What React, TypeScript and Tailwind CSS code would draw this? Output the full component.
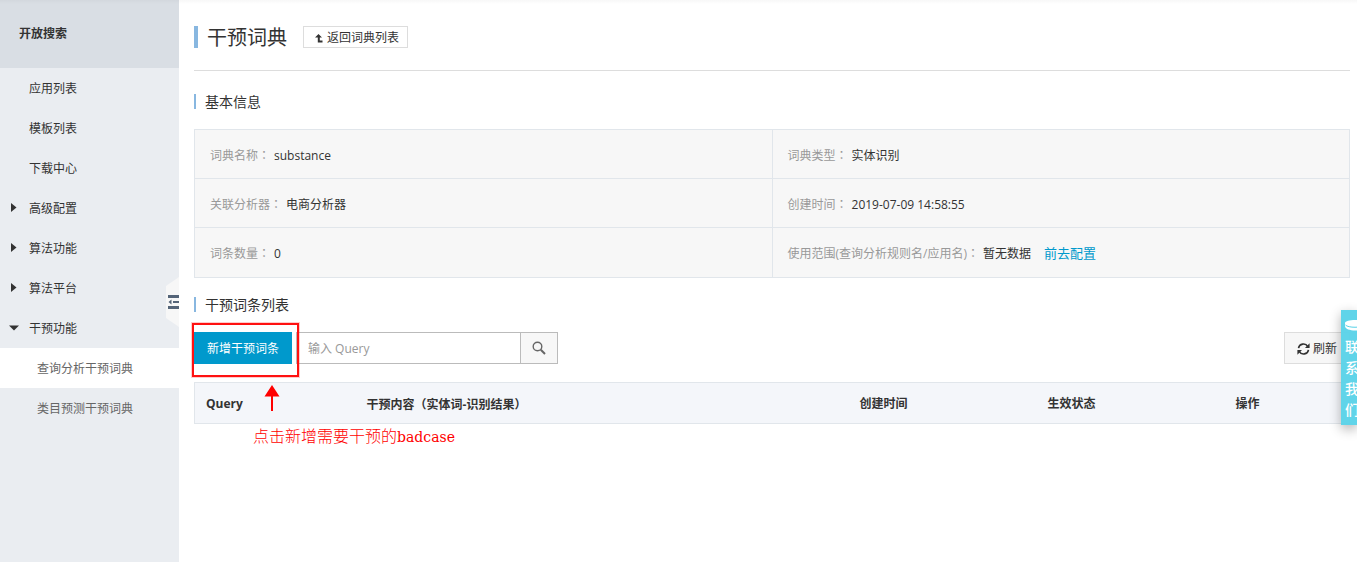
import { useState } from 'react';

const links = ['应用列表', '模板列表', '下载中心'];
const groups = ['高级配置', '算法功能', '算法平台'];
const children = ['查询分析干预词典', '类目预测干预词典'];

const info = [
  [
    { label: '词典名称', value: 'substance' },
    { label: '词典类型', value: '实体识别' },
  ],
  [
    { label: '关联分析器', value: '电商分析器' },
    { label: '创建时间', value: '2019-07-09 14:58:55' },
  ],
  [
    { label: '词条数量', value: '0' },
    {
      label: '使用范围(查询分析规则名/应用名)',
      value: '暂无数据',
      link: '前去配置',
    },
  ],
];

// the TC face centres full-width punctuation in its box
function Punct({ children }: { children: string }) {
  return (
    <span className="font-['Noto_Sans_CJK_TC',sans-serif]">{children}</span>
  );
}

function Sidebar() {
  const [active, setActive] = useState(children[0]);

  return (
    <aside className="relative w-[179px] shrink-0 bg-[#eaedf1]">
      <h2 className="flex h-[68px] items-center bg-[#d9dee4] pl-[19px] font-bold">
        开放搜索
      </h2>
      <nav>
        {links.map((item) => (
          <a
            key={item}
            href="#"
            className="flex h-10 items-center pt-0.5 pl-[29px]"
          >
            {item}
          </a>
        ))}
        {groups.map((item) => (
          <button
            key={item}
            type="button"
            className="flex h-10 w-full items-center pt-0.5 pl-[9px]"
          >
            <svg width="10" height="14" viewBox="0 0 10 14" className="mr-[10px]">
              <path d="M2 1L7.5 5.5L2 10Z" fill="#333" />
            </svg>
            {item}
          </button>
        ))}
        <button
          type="button"
          className="flex h-10 w-full items-center pt-0.5 pl-[9px]"
        >
          <svg width="10" height="14" viewBox="0 0 10 14" className="mr-[10px]">
            <path d="M0 3.5H10L5 8.5Z" fill="#333" />
          </svg>
          干预功能
        </button>
        {children.map((item) => (
          <a
            key={item}
            href="#"
            onClick={() => setActive(item)}
            className={`flex h-10 items-center pt-0.5 pl-[37px] text-[#666] ${
              active == item ? 'bg-white' : ''
            }`}
          >
            {item}
          </a>
        ))}
      </nav>

      <button
        type="button"
        aria-label="收起"
        className="absolute top-[277px] right-0"
      >
        <svg width="13" height="50" viewBox="0 0 13 50">
          <path d="M13 0L0 9V41L13 50Z" fill="#f7f7f7" />
          <path
            d="M2 18H13V21H2ZM7 24H13V26H7ZM2 29H13V32H2ZM5.5 22.5V27.5L2.5 25Z"
            fill="#546478"
          />
        </svg>
      </button>
    </aside>
  );
}

function SectionTitle({ title }: { title: string }) {
  return (
    <h3 className="flex h-[15px] items-center border-l-2 border-[#88b7e0] pl-[9px] text-sm">
      {title}
    </h3>
  );
}

function InfoTable() {
  return (
    <table className="mt-5 w-full table-fixed border-collapse bg-[#f7f7f7]">
      <tbody>
        {info.map((row) => (
          <tr key={row[0].label} className="h-[49px] last:h-[50px]">
            {row.map((cell) => (
              <td
                key={cell.label}
                className="border border-[#e1e6eb] px-[15px] pt-0.5"
              >
                <span className="mr-1 text-[#999]">
                  {cell.label}
                  <Punct>：</Punct>
                </span>
                {cell.value}
                {cell.link && (
                  <a href="#" className="ml-[13px] text-[13px] text-[#09c]">
                    {cell.link}
                  </a>
                )}
              </td>
            ))}
          </tr>
        ))}
      </tbody>
    </table>
  );
}

function Toolbar() {
  const [query, setQuery] = useState('');

  return (
    <div className="relative mt-5 flex h-8">
      <button type="button" className="w-[98px] bg-[#09c] pt-0.5 text-white">
        新增干预词条
      </button>
      <input
        type="text"
        aria-label="Query"
        placeholder="输入 Query"
        value={query}
        onChange={(e) => setQuery(e.target.value)}
        className="ml-1 w-[225px] border border-[#bbb] bg-white px-[11px] pt-0.5 placeholder:text-[#999] focus:outline-none"
      />
      <button
        type="button"
        aria-label="搜索"
        className="-ml-px flex w-[38px] items-center justify-center border border-[#bbb] bg-[#f7f7f7]"
      >
        <svg width="14" height="14" viewBox="0 0 14 14" fill="none" stroke="#666">
          <circle cx="5.5" cy="5.5" r="4.3" strokeWidth="1.4" />
          <path d="M8.8 8.8L13 13" strokeWidth="2" />
        </svg>
      </button>
      <button
        type="button"
        className="ml-auto flex w-[66px] items-center border border-[#ddd] bg-[#f7f7f7] pt-0.5 pl-3"
      >
        <svg
          width="13"
          height="12"
          viewBox="0 0 13 12"
          fill="none"
          stroke="#333"
          strokeWidth="1.6"
          className="mr-[3px]"
        >
          <path d="M1.5 5.2A5 5 0 0 1 10.8 3.6M11.5 6.8A5 5 0 0 1 2.2 8.4" />
          <path d="M12.6 0.3V5H8ZM0.4 11.7V7H5Z" fill="#333" stroke="none" />
        </svg>
        刷新
      </button>

      {/* callout around the add button */}
      <div className="pointer-events-none absolute -top-[9px] -left-0.5 h-[54px] w-[107px] border-2 border-[#f11] ring-1 ring-[#f00]/20" />
      <svg
        width="16"
        height="26"
        viewBox="0 0 16 26"
        fill="#f00"
        className="absolute top-[53px] left-[70px] z-10"
      >
        <path d="M8 0L15.5 11.5H9V26H7V11.5H0.5Z" />
      </svg>
      <p className="absolute top-[92px] left-[59px] text-base leading-6 font-light whitespace-nowrap text-[#f00]">
        点击新增需要干预的
        <span className="font-['DejaVu_Serif',serif] text-sm">badcase</span>
      </p>
    </div>
  );
}

function EntryTable() {
  return (
    <table className="mt-[18px] w-full table-fixed border border-[#e1e6eb] bg-[#f4f6fa] text-left">
      <thead>
        <tr className="h-[41px]">
          <th className="w-[160px] pt-0.5 pl-[11px]">Query</th>
          <th className="pt-0.5 pl-3">
            干预内容<Punct>（</Punct>实体词-识别结果<Punct>）</Punct>
          </th>
          <th className="w-[188px] pt-0.5 pl-3">创建时间</th>
          <th className="w-[188px] pt-0.5 pl-3">生效状态</th>
          <th className="w-[126px] pt-0.5 pl-3">操作</th>
        </tr>
      </thead>
    </table>
  );
}

function ContactTab() {
  return (
    <a
      href="#"
      className="absolute top-[310px] right-0 h-[115px] w-4 overflow-hidden bg-[#57d2e8]/95 pt-[9px] pl-1 text-sm leading-[21px] font-medium text-white shadow-[0_4px_12px_rgba(0,0,0,0.3)]"
    >
      <svg width="20" height="12" viewBox="0 0 20 12" className="mb-[5px] max-w-none">
        <path d="M0 4C0 0 20 0 20 4V7C20 13 0 13 0 7Z" fill="#fff" />
        <path
          d="M0.5 6C3 9 17 9 19.5 6"
          fill="none"
          stroke="#57d2e8"
          strokeWidth="1"
        />
      </svg>
      <span className="block w-[14px]">联系我们</span>
    </a>
  );
}

export default function App() {
  return (
    <div className="relative flex min-h-screen overflow-hidden bg-white font-['Open_Sans','Noto_Sans_CJK_SC',sans-serif] text-xs text-[#333]">
      <Sidebar />
      <main className="min-w-0 grow pr-[7px] pl-[15px]">
        <header className="flex h-[71px] items-center border-b border-[#ddd] pt-1">
          <h1 className="flex h-[22px] items-center border-l-4 border-[#88b7e0] pt-0.5 pl-[9px] text-xl">
            干预词典
          </h1>
          <a
            href="#"
            className="ml-4 flex h-[22px] items-center border border-[#ddd] pt-0.5 pr-2 pl-[11px]"
          >
            <svg width="8" height="9" viewBox="0 0 8 9" className="mr-1" fill="#333">
              <path d="M3.5 0L7 3.5H4.8V6.5H7.5V8.5H2.8V3.5H0Z" />
            </svg>
            返回词典列表
          </a>
        </header>
        <section className="mt-[23px]">
          <SectionTitle title="基本信息" />
          <InfoTable />
        </section>
        <section className="mt-[19px]">
          <SectionTitle title="干预词条列表" />
          <Toolbar />
          <EntryTable />
        </section>
      </main>
      <ContactTab />
      <div className="pointer-events-none absolute inset-x-0 top-0 h-1 bg-linear-to-b from-black/3 to-transparent" />
    </div>
  );
}
